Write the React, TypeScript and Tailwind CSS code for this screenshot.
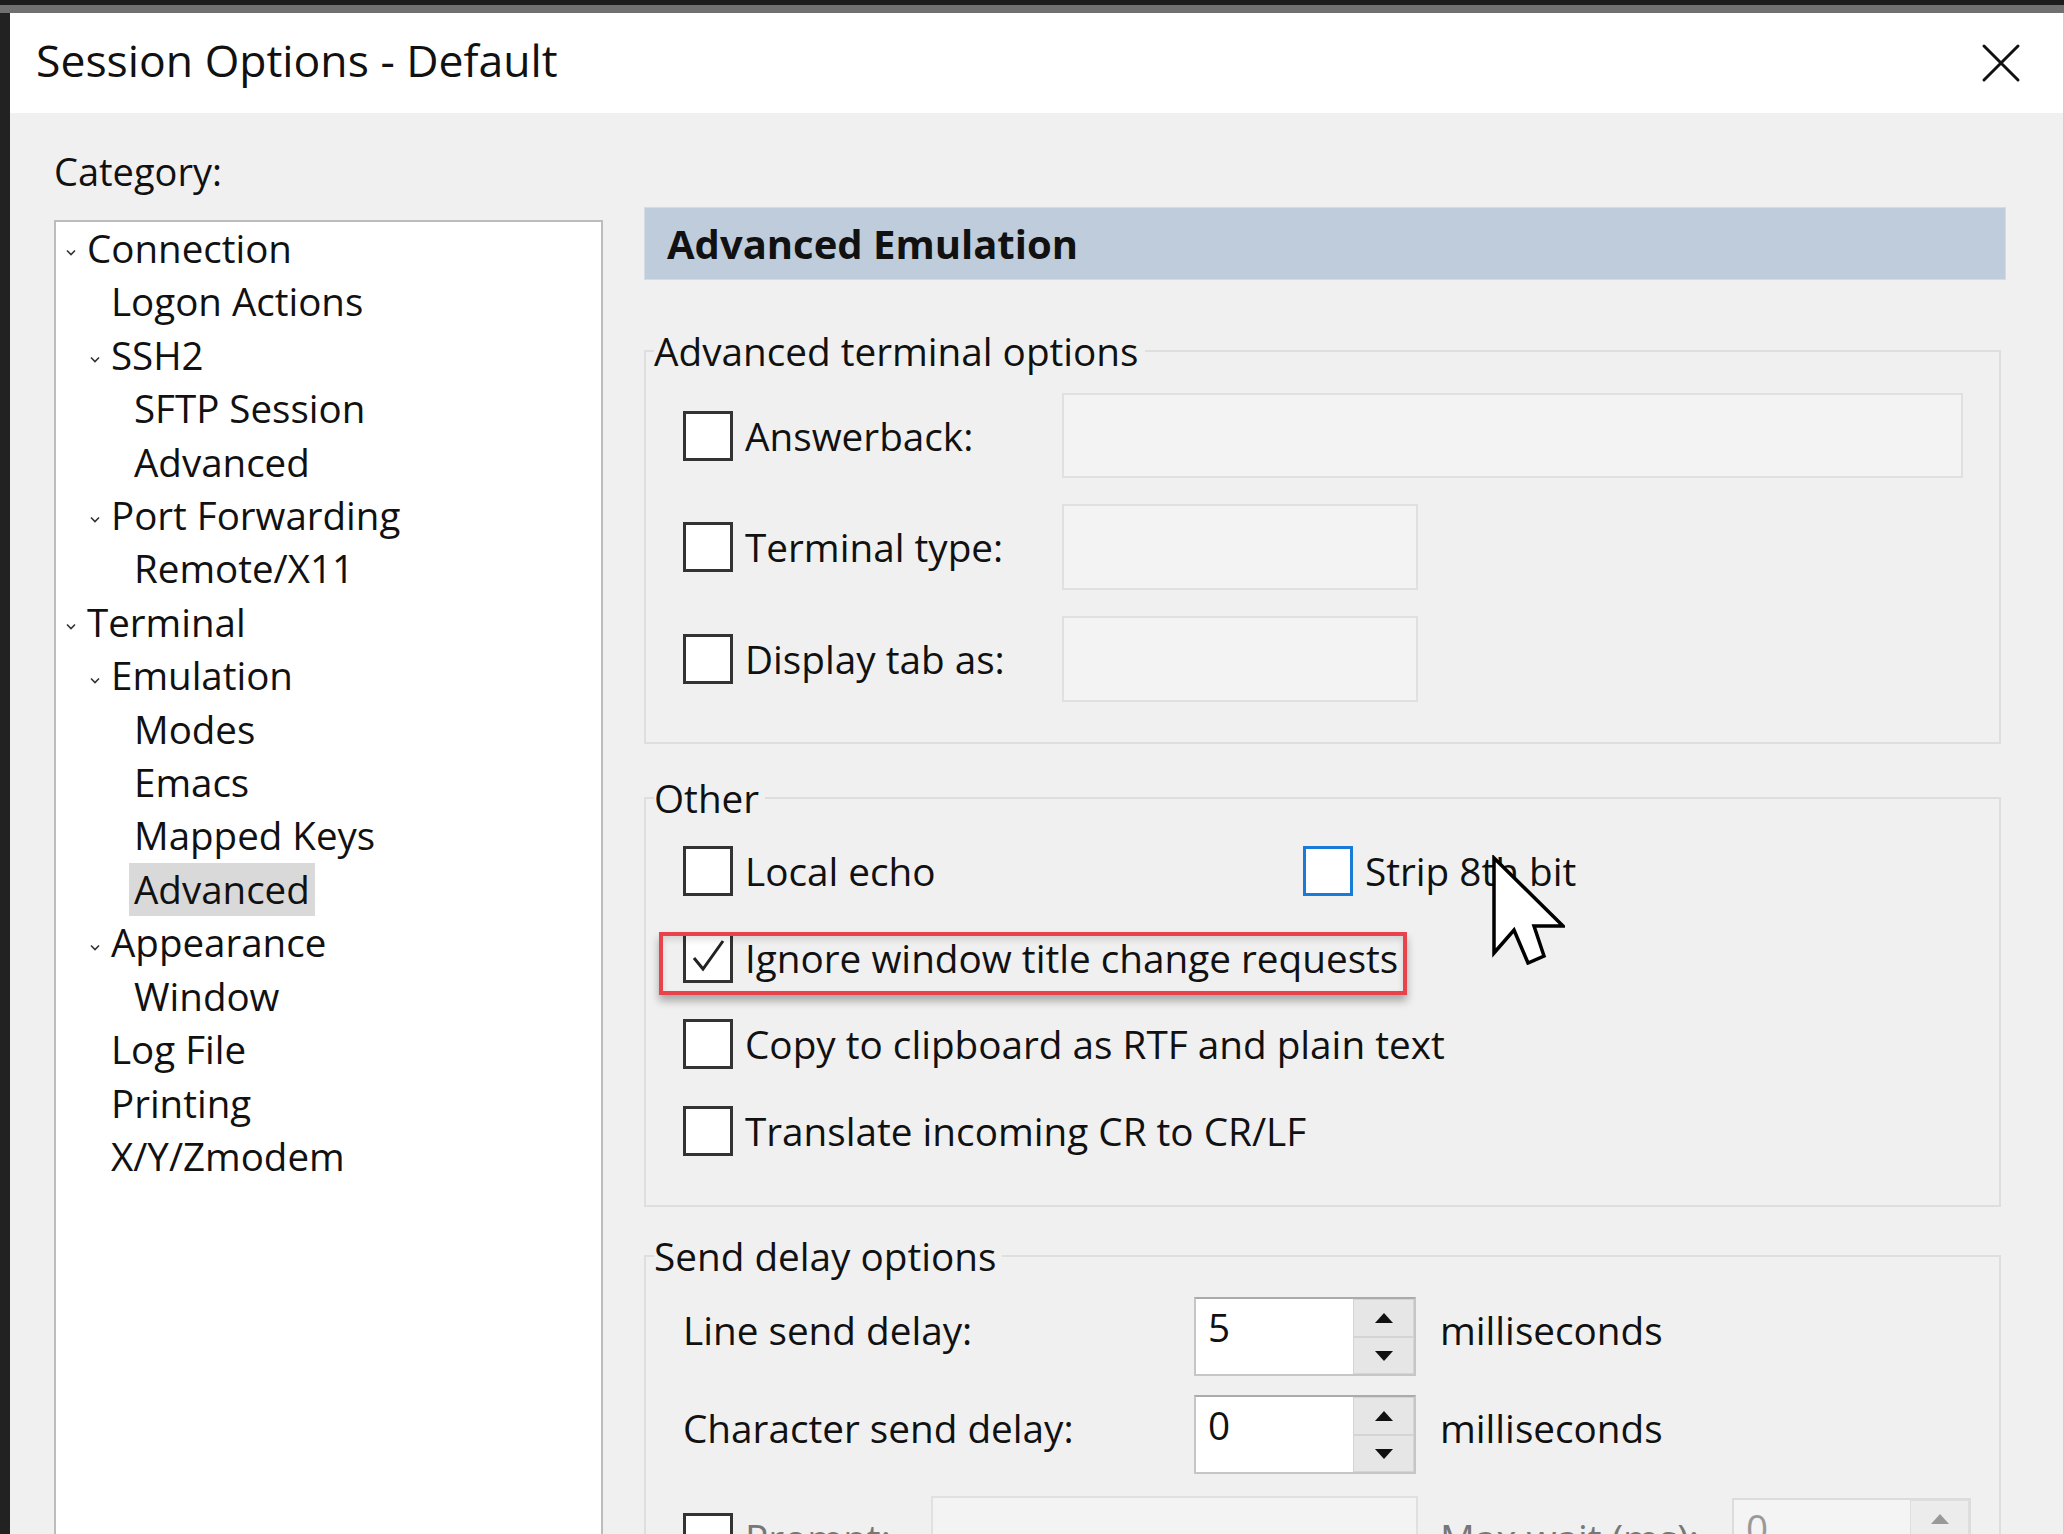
import React from "react";

type TreeNode = { level: 0 | 1 | 2; label: string; open?: boolean; selected?: boolean };

const tree: TreeNode[] = [
  { level: 0, label: "Connection", open: true },
  { level: 1, label: "Logon Actions" },
  { level: 1, label: "SSH2", open: true },
  { level: 2, label: "SFTP Session" },
  { level: 2, label: "Advanced" },
  { level: 1, label: "Port Forwarding", open: true },
  { level: 2, label: "Remote/X11" },
  { level: 0, label: "Terminal", open: true },
  { level: 1, label: "Emulation", open: true },
  { level: 2, label: "Modes" },
  { level: 2, label: "Emacs" },
  { level: 2, label: "Mapped Keys" },
  { level: 2, label: "Advanced", selected: true },
  { level: 1, label: "Appearance", open: true },
  { level: 2, label: "Window" },
  { level: 1, label: "Log File" },
  { level: 1, label: "Printing" },
  { level: 1, label: "X/Y/Zmodem" },
];

const indent = { 0: "pl-[10px]", 1: "pl-[34px]", 2: "pl-[57px]" };

function Chevron() {
  return (
    <svg width="10" height="7" viewBox="0 0 10 7" className="mt-[8px]">
      <path d="M1 1.5 L5 5.5 L9 1.5" fill="none" stroke="#333" strokeWidth="1.6" />
    </svg>
  );
}

function Checkbox({ checked, focus }: { checked?: boolean; focus?: boolean }) {
  return (
    <div
      className={
        focus
          ? "h-[50px] w-[50px] shrink-0 border-[3px] border-[#1a7ad8] bg-white"
          : "h-[50px] w-[50px] shrink-0 border-[3px] border-[#333333] bg-white"
      }
    >
      {checked && (
        <svg width="44" height="44" viewBox="0 0 44 44">
          <path d="M8 22 L17 33 L37 5" fill="none" stroke="#222" strokeWidth="3" />
        </svg>
      )}
    </div>
  );
}

function Arrow({ up, color = "#111" }: { up?: boolean; color?: string }) {
  return (
    <svg width="20" height="12" viewBox="0 0 20 12">
      <path d={up ? "M1 11 L10 1 L19 11 Z" : "M1 1 L19 1 L10 11 Z"} fill={color} />
    </svg>
  );
}

function Spinner({ value }: { value: string }) {
  return (
    <div className="mt-[13px] flex h-[79px] w-[222px] border-2 border-[#c6c6c6] border-t-[#ababab]">
      <div className="w-[157px] bg-white pl-[12px] pt-[6px] leading-[44px]">{value}</div>
      <div className="flex w-[61px] flex-col">
        <div className="flex flex-1 items-center justify-center border border-[#d4d4d4] bg-[#e6e6e6]">
          <Arrow up />
        </div>
        <div className="flex flex-1 items-center justify-center border border-[#d4d4d4] bg-[#e6e6e6]">
          <Arrow />
        </div>
      </div>
    </div>
  );
}

function Cursor() {
  return (
    <svg width="74" height="110" viewBox="-3 -3 74 110" className="pointer-events-none">
      <path
        d="M0 0 L0 95 L20 72 L34 105 L50 98 L40 68 L69 68 Z"
        fill="white"
        stroke="black"
        strokeWidth="3.5"
        strokeLinejoin="miter"
      />
    </svg>
  );
}

export default function App() {
  return (
    <div className="flex h-[1534px] w-[2064px] flex-col overflow-hidden bg-[#1c1c1c] font-['Open_Sans','Noto_Sans',sans-serif] text-[#111]">
      <div className="h-[5px] shrink-0" />
      <div className="h-[8px] shrink-0 bg-[#707070]" />
      <div className="flex flex-1">
        <div className="w-[10px] shrink-0 bg-[#222]" />
        <div className="flex flex-1 flex-col border-r border-[#cfcfcf] bg-[#f0f0f0]">
          {/* title bar */}
          <div className="flex h-[100px] shrink-0 items-center justify-between bg-white pl-[26px] pr-[42px]">
            <span className="mb-[5px] text-[44.5px] leading-none">Session Options - Default</span>
            <svg width="40" height="40" viewBox="0 0 40 40">
              <path d="M3 3 L37 37 M37 3 L3 37" stroke="#111" strokeWidth="3" strokeLinecap="round" />
            </svg>
          </div>

          <div className="flex flex-1 gap-[41px] pl-[44px]">
            {/* category tree */}
            <div className="flex w-[549px] shrink-0 flex-col">
              <div className="mt-[36px] text-[38px] leading-[44px]">Category:</div>
              <div className="mt-[27px] h-[1400px] border-2 border-[#bcbcbc] bg-white text-[38.5px]">
                {tree.map((n, i) => (
                  <div key={i} className={"flex h-[53.43px] items-center " + indent[n.level]}>
                    <div className="flex w-[21px] shrink-0 items-center">{n.open && <Chevron />}</div>
                    {n.selected ? (
                      <span className="-ml-[5px] flex h-full items-center bg-[#d9d9d9] px-[5px]">{n.label}</span>
                    ) : (
                      <span>{n.label}</span>
                    )}
                  </div>
                ))}
              </div>
            </div>

            {/* settings */}
            <div className="flex w-[1362px] shrink-0 flex-col pt-[94px] text-[38.7px]">
              <div className="flex h-[73px] items-center border border-[#d3dce6] bg-[#bfccdb] pl-[22px] text-[40px] font-bold">
                Advanced Emulation
              </div>

              <fieldset className="mt-[49px] w-[1357px] border-2 border-[#dedede] pb-[27px] pt-[7px]">
                <legend className="ml-[8px] pr-[6px] leading-[44px]">Advanced terminal options</legend>
                <div className="flex h-[111.5px] items-center pl-[37px]">
                  <div className="flex w-[379px] items-center gap-[12px]">
                    <Checkbox />
                    <span>Answerback:</span>
                  </div>
                  <div className="h-[85px] w-[901px] border-2 border-[#e0e0e0] bg-[#f3f3f3]" />
                </div>
                <div className="flex h-[111.5px] items-center pl-[37px]">
                  <div className="flex w-[379px] items-center gap-[12px]">
                    <Checkbox />
                    <span>Terminal type:</span>
                  </div>
                  <div className="h-[86px] w-[356px] border-2 border-[#e0e0e0] bg-[#f3f3f3]" />
                </div>
                <div className="flex h-[111.5px] items-center pl-[37px]">
                  <div className="flex w-[379px] items-center gap-[12px]">
                    <Checkbox />
                    <span>Display tab as:</span>
                  </div>
                  <div className="h-[86px] w-[356px] border-2 border-[#e0e0e0] bg-[#f3f3f3]" />
                </div>
              </fieldset>

              <fieldset className="mt-[32px] w-[1357px] border-2 border-[#dedede] pb-[31px] pt-[8px]">
                <legend className="ml-[8px] pr-[6px] leading-[44px]">Other</legend>
                <div className="relative flex h-[86.7px] items-center pl-[37px]">
                  <div className="flex w-[620px] items-center gap-[12px]">
                    <Checkbox />
                    <span>Local echo</span>
                  </div>
                  <div className="flex items-center gap-[12px]">
                    <Checkbox focus />
                    <span>Strip 8th bit</span>
                  </div>
                  <div className="absolute left-[845px] top-[27px]">
                    <Cursor />
                  </div>
                </div>
                <div className="relative flex h-[86.7px] items-center pl-[37px]">
                  <div className="flex items-center gap-[12px]">
                    <Checkbox checked />
                    <span>Ignore window title change requests</span>
                  </div>
                  <div className="pointer-events-none absolute left-[13px] top-[18px] h-[63px] w-[748px] border-[4px] border-[#e8434a] shadow-[inset_0_4px_6px_rgba(0,0,0,0.12),0_6px_8px_rgba(0,0,0,0.3)]" />
                </div>
                <div className="flex h-[86.7px] items-center gap-[12px] pl-[37px]">
                  <Checkbox />
                  <span>Copy to clipboard as RTF and plain text</span>
                </div>
                <div className="flex h-[86.7px] items-center gap-[12px] pl-[37px]">
                  <Checkbox />
                  <span>Translate incoming CR to CR/LF</span>
                </div>
              </fieldset>

              <fieldset className="mt-[27px] w-[1357px] border-2 border-[#dedede] pt-[3px]">
                <legend className="ml-[8px] pr-[6px] leading-[44px]">Send delay options</legend>
                <div className="flex h-[98px] items-center pl-[37px]">
                  <span className="w-[511px]">Line send delay:</span>
                  <Spinner value="5" />
                  <span className="ml-[24px]">milliseconds</span>
                </div>
                <div className="flex h-[98px] items-center pl-[37px]">
                  <span className="w-[511px]">Character send delay:</span>
                  <Spinner value="0" />
                  <span className="ml-[24px]">milliseconds</span>
                </div>
                <div className="mt-[12px] flex h-[98px] items-center pl-[37px]">
                  <div className="flex w-[248px] items-center gap-[12px]">
                    <Checkbox />
                    <span className="text-[#777]">Prompt:</span>
                  </div>
                  <div className="h-[85px] w-[487px] border-2 border-[#e0e0e0] bg-[#f3f3f3]" />
                  <span className="ml-[22px] w-[292px] text-[#777]">Max wait (ms):</span>
                  <div className="flex h-[80px] w-[239px] border-2 border-[#dcdcdc]">
                    <div className="w-[176px] bg-[#f4f4f4] pl-[12px] pt-[6px] leading-[44px] text-[#999]">0</div>
                    <div className="flex flex-1 flex-col">
                      <div className="flex flex-1 items-center justify-center border border-[#dedede] bg-[#ececec]">
                        <Arrow up color="#999" />
                      </div>
                      <div className="flex flex-1 items-center justify-center border border-[#dedede] bg-[#ececec]">
                        <Arrow color="#999" />
                      </div>
                    </div>
                  </div>
                </div>
              </fieldset>
            </div>
          </div>
        </div>
      </div>
    </div>
  );
}
